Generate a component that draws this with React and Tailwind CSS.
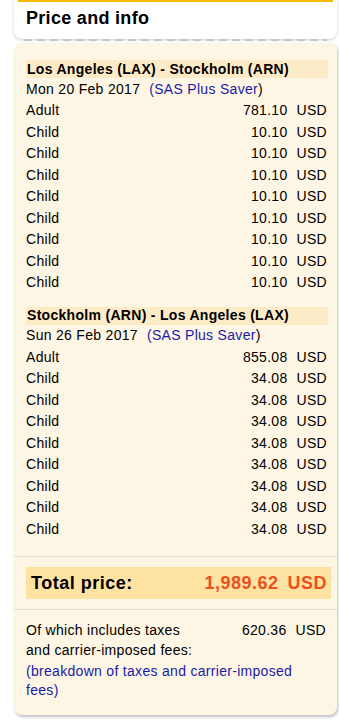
const legs = [
  {
    route: 'Los Angeles (LAX) - Stockholm (ARN)',
    date: 'Mon 20 Feb 2017',
    adult: '781.10',
    child: '10.10',
  },
  {
    route: 'Stockholm (ARN) - Los Angeles (LAX)',
    date: 'Sun 26 Feb 2017',
    adult: '855.08',
    child: '34.08',
  },
];

const PriceRow = ({ label, amount }) => (
  <div className="flex h-[21.5px] items-center justify-between pr-[1px]">
    <span>{label}</span>
    <span>
      {amount}
      <span className="ml-[9px]">USD</span>
    </span>
  </div>
);

const Leg = ({ leg }) => (
  <div>
    <div className="flex h-[18px] items-center bg-[#fdebc8] pl-[1px] font-bold">{leg.route}</div>
    <div className="flex h-[22px] items-center">
      {leg.date}
      <span className="ml-[9px] text-[#1b1ba8]">(SAS Plus Saver</span>)
    </div>
    <PriceRow label="Adult" amount={leg.adult} />
    {Array.from({ length: 8 }).map((_, i) => (
      <PriceRow key={i} label="Child" amount={leg.child} />
    ))}
  </div>
);

const App = () => {
  return (
    <div className="min-h-[725px] bg-white pl-[14px] pr-[2px] font-['Liberation_Sans',Arial,sans-serif] text-[14px] tracking-[0.3px] text-black">
      <div className="h-[39px] rounded-b-lg bg-white shadow-[0_1px_3px_rgba(0,0,0,0.2)]">
        <div className="mx-[4px] h-[2px] bg-[#f6b800]" />
        <h2 className="pl-[12px] pt-[4px] text-[18px] font-bold leading-[24px] tracking-[0.3px]">Price and info</h2>
      </div>
      <div className="relative z-10 mx-[10px] h-[2px] bg-[repeating-linear-gradient(90deg,#c9c6c0_0_8px,transparent_8px_13px)]" />
      <div className="mt-[2px] rounded-lg bg-[#fef6e4] pb-[15px] shadow-[1px_2px_3px_rgba(0,0,0,0.25)]">
        <div className="pl-[12px] pr-[9px] pt-[17px]">
          <Leg leg={legs[0]} />
          <div className="h-[13px]" />
          <Leg leg={legs[1]} />
        </div>
        <div className="mt-[16px] border-t border-[#e3dccd]" />
        <div className="py-[10px] pl-[12px] pr-[6px]">
          <div className="flex h-[32px] items-center justify-between bg-[#fee2a2] pl-[5px] pr-[4px] text-[18px] font-bold tracking-[0.5px]">
            <span>Total price:</span>
            <span className="text-[#e9521c]">
              1,989.62<span className="ml-[9px]">USD</span>
            </span>
          </div>
        </div>
        <div className="border-t border-[#e3dccd]" />
        <div className="pl-[12px] pr-[10px] pt-[10px]">
          <div className="flex justify-between leading-[20px]">
            <span>
              Of which includes taxes
              <br />
              and carrier-imposed fees:
            </span>
            <span className="pr-[1px]">
              620.36<span className="ml-[9px]">USD</span>
            </span>
          </div>
          <div className="mt-[2px] leading-[19px] text-[#1b1ba8]">
            (breakdown of taxes and carrier-imposed
            <br />
            fees)
          </div>
        </div>
      </div>
    </div>
  );
};

export default App;
